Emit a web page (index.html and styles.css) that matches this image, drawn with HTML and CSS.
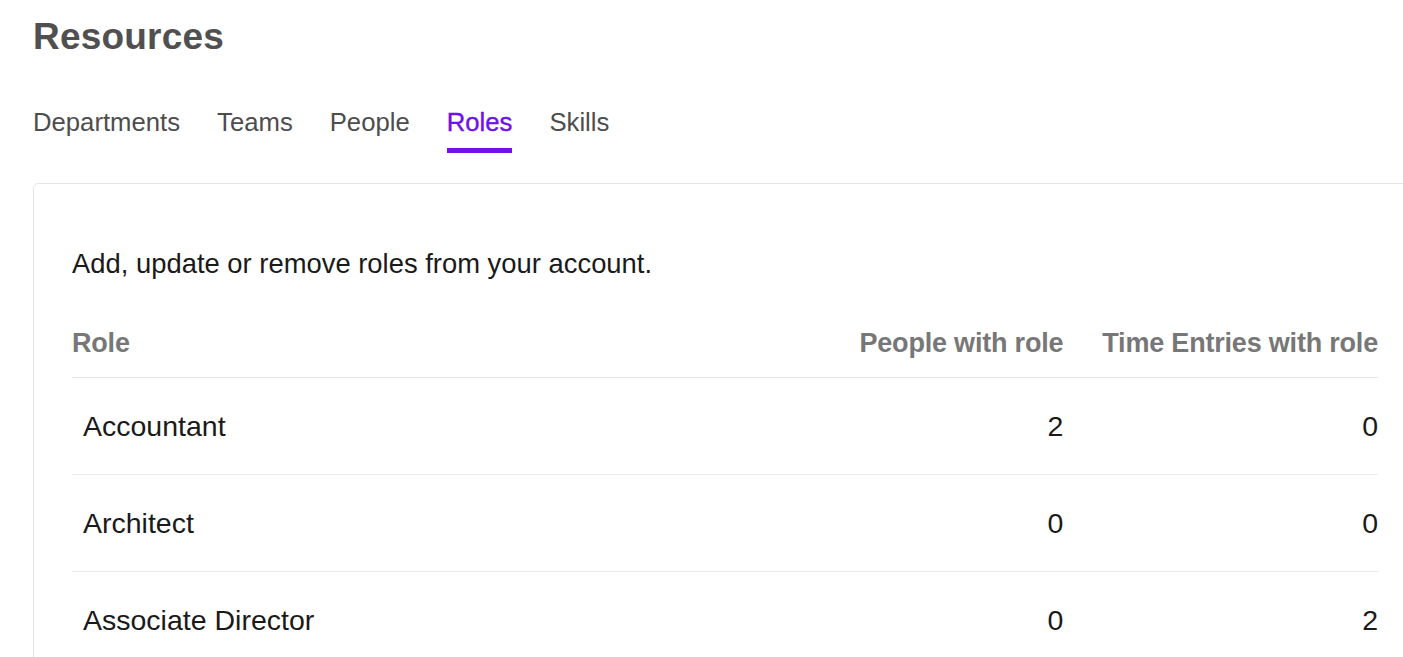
FILE: index.html
```html
<!DOCTYPE html>
<html lang="en">
<head>
    <meta charset="utf-8">
    <title>Resources - Roles</title>
    <meta name="viewport" content="width=device-width, initial-scale=1.0">
    <link rel="stylesheet" href="styles.css">
</head>
<body>

<div class="page">
    <h1 class="page-title">Resources</h1>

    <nav class="tabs">
        <a class="tab" href="#">Departments</a>
        <a class="tab" href="#">Teams</a>
        <a class="tab" href="#">People</a>
        <a class="tab active" href="#">Roles</a>
        <a class="tab" href="#">Skills</a>
    </nav>

    <div class="card">
        <p class="intro">Add, update or remove roles from your account.</p>

        <div class="roles-table">
            <div class="row head">
                <div class="cell">Role</div>
                <div class="cell num">People with role</div>
                <div class="cell num">Time Entries with role</div>
            </div>
            <div class="row">
                <div class="cell name">Accountant</div>
                <div class="cell num">2</div>
                <div class="cell num">0</div>
            </div>
            <div class="row">
                <div class="cell name">Architect</div>
                <div class="cell num">0</div>
                <div class="cell num">0</div>
            </div>
            <div class="row">
                <div class="cell name">Associate Director</div>
                <div class="cell num">0</div>
                <div class="cell num">2</div>
            </div>
        </div>
    </div>
</div>

</body>
</html>
```

FILE: styles.css
```css
html, body {
    margin: 0;
    padding: 0;
    overflow: hidden;
}
body {
    font-family: "Liberation Sans", Arial, sans-serif;
    background-color: #ffffff;
    color: #1a1a1a;
}
.page {
    padding: 15px 0 0 33px;
}
.page-title {
    margin: 0;
    font-size: 37px;
    line-height: 44px;
    font-weight: bold;
    color: #505050;
    letter-spacing: 0.2px;
}
.tabs {
    display: flex;
    gap: 37px;
    margin-top: 48px;
    margin-bottom: 30px;
}
.tab {
    font-size: 25.7px;
    line-height: 30px;
    color: #4d4d4d;
    text-decoration: none;
    padding-bottom: 11px;
    border-bottom: 5px solid transparent;
}
.tab.active {
    color: #6f12e8;
    border-bottom-color: #6f12e8;
    -webkit-text-stroke: 0.4px #6f12e8;
}
.card {
    width: 1306px;
    padding: 64px 38px 0 38px;
    border: 1px solid #e5e5e5;
    border-radius: 5px;
    height: 600px;
}
.intro {
    margin: 0 0 47px 0;
    font-size: 27.4px;
    line-height: 32px;
    color: #1a1a1a;
}
.roles-table {
    display: grid;
    grid-template-columns: 1fr auto auto;
}
.row {
    display: contents;
}
.cell {
    font-size: 28.5px;
    line-height: 32px;
    height: 96px;
    display: flex;
    align-items: center;
    border-bottom: 1px solid #ebebeb;
}
.cell.num {
    justify-content: flex-end;
    padding-left: 39px;
}
.cell.name {
    padding-left: 11px;
}
.head .cell {
    height: auto;
    font-size: 27px;
    font-weight: bold;
    color: #777777;
    letter-spacing: -0.2px;
    padding-bottom: 18px;
    border-bottom-color: #e6e6e6;
}
```
